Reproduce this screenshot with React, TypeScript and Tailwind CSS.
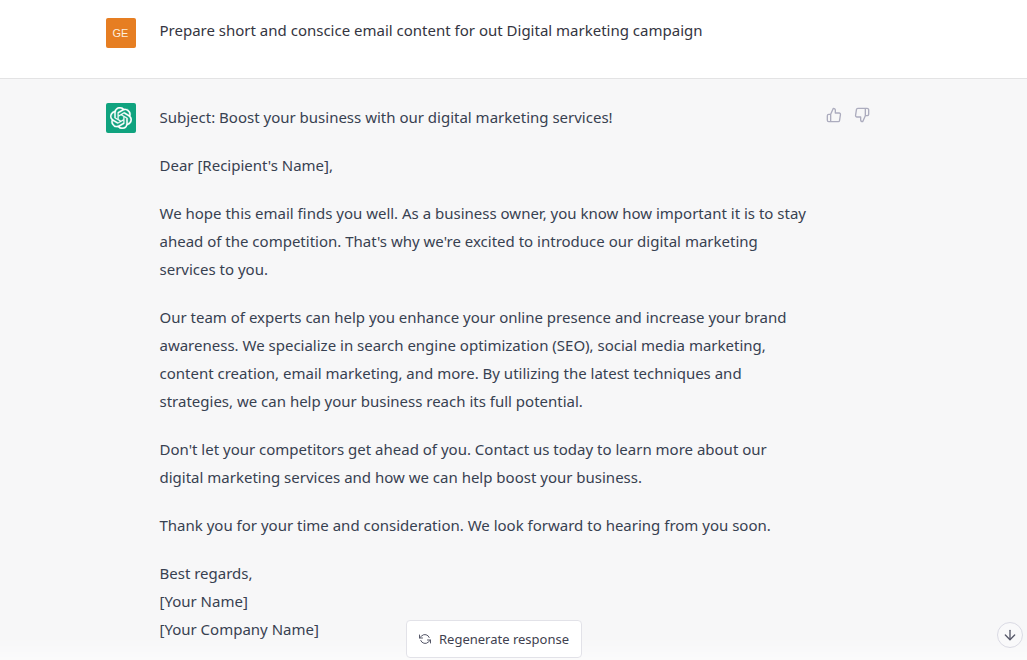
import React from "react";
import { FiArrowDown, FiRefreshCcw, FiThumbsDown, FiThumbsUp } from "react-icons/fi";

const reply: string[] = [
  "Subject: Boost your business with our digital marketing services!",
  "Dear [Recipient's Name],",
  "We hope this email finds you well. As a business owner, you know how important it is to stay ahead of the competition. That's why we're excited to introduce our digital marketing services to you.",
  "Our team of experts can help you enhance your online presence and increase your brand awareness. We specialize in search engine optimization (SEO), social media marketing, content creation, email marketing, and more. By utilizing the latest techniques and strategies, we can help your business reach its full potential.",
  "Don't let your competitors get ahead of you. Contact us today to learn more about our digital marketing services and how we can help boost your business.",
  "Thank you for your time and consideration. We look forward to hearing from you soon.",
  "Best regards,\n[Your Name]\n[Your Company Name]",
];

function AssistantLogo() {
  return (
    <svg viewBox="0 0 24 24" className="size-[22px]" fill="currentColor" stroke="currentColor" strokeWidth="0.3" role="img" aria-label="Assistant">
      <path d="M22.2819 9.8211a5.9847 5.9847 0 0 0-.5157-4.9108 6.0462 6.0462 0 0 0-6.5098-2.9A6.0651 6.0651 0 0 0 4.9807 4.1818a5.9847 5.9847 0 0 0-3.9977 2.9 6.0462 6.0462 0 0 0 .7427 7.0966 5.98 5.98 0 0 0 .511 4.9107 6.051 6.051 0 0 0 6.5146 2.9001A5.9847 5.9847 0 0 0 13.2599 24a6.0557 6.0557 0 0 0 5.7718-4.2058 5.9894 5.9894 0 0 0 3.9977-2.9001 6.0557 6.0557 0 0 0-.7475-7.0729zm-9.022 12.6081a4.4755 4.4755 0 0 1-2.8764-1.0408l.1419-.0804 4.7783-2.7582a.7948.7948 0 0 0 .3927-.6813v-6.7369l2.02 1.1686a.071.071 0 0 1 .038.052v5.5826a4.504 4.504 0 0 1-4.4945 4.4944zm-9.6607-4.1254a4.4708 4.4708 0 0 1-.5346-3.0137l.142.0852 4.783 2.7582a.7712.7712 0 0 0 .7806 0l5.8428-3.3685v2.3324a.0804.0804 0 0 1-.0332.0615L9.74 19.9502a4.4992 4.4992 0 0 1-6.1408-1.6464zM2.3408 7.8956a4.485 4.485 0 0 1 2.3655-1.9728V11.6a.7664.7664 0 0 0 .3879.6765l5.8144 3.3543-2.0201 1.1685a.0757.0757 0 0 1-.071 0l-4.8303-2.7865A4.504 4.504 0 0 1 2.3408 7.872zm16.5963 3.8558L13.1038 8.364 15.1192 7.2a.0757.0757 0 0 1 .071 0l4.8303 2.7913a4.4944 4.4944 0 0 1-.6765 8.1042v-5.6772a.79.79 0 0 0-.407-.667zm2.0107-3.0231l-.142-.0852-4.7735-2.7818a.7759.7759 0 0 0-.7854 0L9.409 9.2297V6.8974a.0662.0662 0 0 1 .0284-.0615l4.8303-2.7866a4.4992 4.4992 0 0 1 6.6802 4.66zM8.3065 12.863l-2.02-1.1638a.0804.0804 0 0 1-.038-.0567V6.0742a4.4992 4.4992 0 0 1 7.3757-3.4537l-.142.0805L8.704 5.459a.7948.7948 0 0 0-.3927.6813zm1.0976-2.3654l2.602-1.4998 2.6069 1.4998v2.9994l-2.5974 1.4997-2.6067-1.4997Z" />
    </svg>
  );
}

export default function App() {
  return (
    <div className="flex min-h-screen flex-col bg-white font-['Noto_Sans',sans-serif] text-[15px] leading-7 text-[#343541]">
      <section className="border-b border-[#e3e3e4] pt-4 pr-12 pb-[30px]">
        <div className="mx-auto flex max-w-[816px] gap-6 px-6">
          <div className="mt-0.5 flex size-[30px] shrink-0 items-center justify-center rounded-xs bg-[#e67e22] font-['Liberation_Sans',sans-serif] text-[11px] text-[#fdeedd]">
            GE
          </div>
          <p>Prepare short and conscice email content for out Digital marketing campaign</p>
        </div>
      </section>

      <section className="grow bg-[#f7f7f8] pt-6 pr-12 pb-4 text-[#374151]">
        <div className="mx-auto flex max-w-[816px] px-6">
          <div className="mr-6 flex size-[30px] shrink-0 items-center justify-center rounded-xs bg-[#10a37f] text-white">
            <AssistantLogo />
          </div>
          <div className="flex min-w-0 grow flex-col gap-5">
            {reply.map((text) => (
              <p key={text} className="whitespace-pre-line">
                {text}
              </p>
            ))}
          </div>
          <div className="flex shrink-0 items-start gap-1 pl-3 text-[#acacbe]">
            <button type="button" aria-label="Good response" className="p-1">
              <FiThumbsUp className="size-4" />
            </button>
            <button type="button" aria-label="Bad response" className="p-1">
              <FiThumbsDown className="size-4" />
            </button>
          </div>
        </div>
      </section>

      <div className="pointer-events-none fixed inset-x-0 bottom-0 flex justify-center bg-linear-to-b from-white/0 from-60% to-white/50 pt-6 pr-[39px] pb-0.5">
        <button
          type="button"
          className="pointer-events-auto flex items-center gap-2 rounded border border-[#e2e2e8] bg-white px-3 py-2 text-[13px] leading-5 text-[#40414f]"
        >
          <FiRefreshCcw className="size-3 text-[#565869]" />
          Regenerate response
        </button>
        <button
          type="button"
          aria-label="Scroll to bottom"
          className="pointer-events-auto absolute right-1 bottom-3 flex size-[26px] items-center justify-center rounded-full border border-[#d9d9e3] bg-[#f9f9fa] text-[#565869]"
        >
          <FiArrowDown className="size-4" />
        </button>
      </div>
    </div>
  );
}
